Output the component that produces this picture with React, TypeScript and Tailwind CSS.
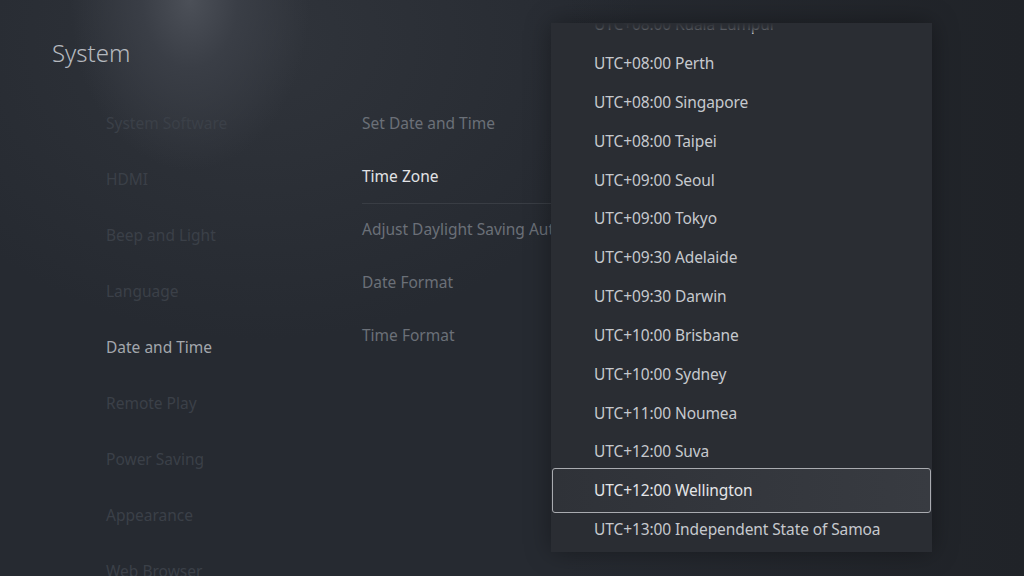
const sections = [
  "System Software",
  "HDMI",
  "Beep and Light",
  "Language",
  "Date and Time",
  "Remote Play",
  "Power Saving",
  "Appearance",
  "Web Browser",
];

const options = [
  { label: "Set Date and Time" },
  { label: "Time Zone", focused: true },
  { label: "Adjust Daylight Saving Automatically" },
  { label: "Date Format" },
  { label: "Time Format" },
];

const zones = [
  "UTC+08:00 Kuala Lumpur",
  "UTC+08:00 Perth",
  "UTC+08:00 Singapore",
  "UTC+08:00 Taipei",
  "UTC+09:00 Seoul",
  "UTC+09:00 Tokyo",
  "UTC+09:30 Adelaide",
  "UTC+09:30 Darwin",
  "UTC+10:00 Brisbane",
  "UTC+10:00 Sydney",
  "UTC+11:00 Noumea",
  "UTC+12:00 Suva",
  "UTC+12:00 Wellington",
  "UTC+13:00 Independent State of Samoa",
];

const selectedZone = "UTC+12:00 Wellington";

function ZoneList() {
  return (
    <div className="absolute left-[551px] top-[23px] h-[529px] w-[381px] overflow-hidden bg-[#2a2d33] shadow-[0_0_24px_rgba(0,0,0,0.35)]">
      <ul className="-mt-[17.5px]">
        {zones.map((zone) => {
          const selected = zone === selectedZone;
          return (
            <li
              key={zone}
              className={
                selected
                  ? "relative flex h-[38.83px] items-center pl-[43px] text-[15.5px] tracking-[-0.1px] text-[#e4e5e8]"
                  : "relative flex h-[38.83px] items-center pl-[43px] text-[15.5px] tracking-[-0.1px] text-[#c6c9ce]"
              }
            >
              {selected && (
                <span className="absolute inset-x-px -inset-y-[3px] rounded-[3px] border-[1.5px] border-[#a9abb0] bg-gradient-to-r from-[#2f3238] to-[#383b41]" />
              )}
              <span className="relative">{zone}</span>
            </li>
          );
        })}
      </ul>
      {/* the row scrolled past the top fades out */}
      <div className="pointer-events-none absolute inset-x-0 top-0 h-[10px] bg-gradient-to-b from-[#2a2d33] via-[#2a2d33]/85 to-[#2a2d33]/40" />
    </div>
  );
}

export default function App() {
  return (
    <div
      className="relative h-[576px] w-[1024px] overflow-hidden bg-[#23272e] bg-[radial-gradient(ellipse_120px_170px_at_190px_0px,#4c5058_0%,#3a3e46_40%,transparent_100%),radial-gradient(ellipse_380px_300px_at_260px_40px,#30343b_0%,transparent_100%),linear-gradient(90deg,#262a31_0%,#262a31_55%,#202328_100%)]"
      style={{ fontFamily: '"Noto Sans", "Open Sans", Arial, sans-serif' }}
    >
      <div className="flex">
        <div className="w-[310px] shrink-0 pl-[52px] pt-[36px]">
          <h1 className="text-[24px] font-light leading-[34px] text-[#b5b9bf]">
            System
          </h1>
          <ul className="ml-[54px] mt-[26px]">
            {sections.map((s) => (
              <li
                key={s}
                className={
                  s === "Date and Time"
                    ? "flex h-[56px] items-center text-[15.5px] text-[#a3a7ad]"
                    : "flex h-[56px] items-center text-[15.5px] text-[#3b4048]"
                }
              >
                {s}
              </li>
            ))}
          </ul>
        </div>

        <ul className="ml-[52px] mt-[97.5px] w-[320px] shrink-0">
          {options.map((o) => (
            <li
              key={o.label}
              className={
                o.focused
                  ? "flex h-[53px] items-center whitespace-nowrap border-b border-[#393d44] text-[15.5px] text-[#e2e3e6]"
                  : "flex h-[53px] items-center whitespace-nowrap text-[15.5px] text-[#6b7078]"
              }
            >
              {o.label}
            </li>
          ))}
        </ul>
      </div>

      <ZoneList />
    </div>
  );
}
